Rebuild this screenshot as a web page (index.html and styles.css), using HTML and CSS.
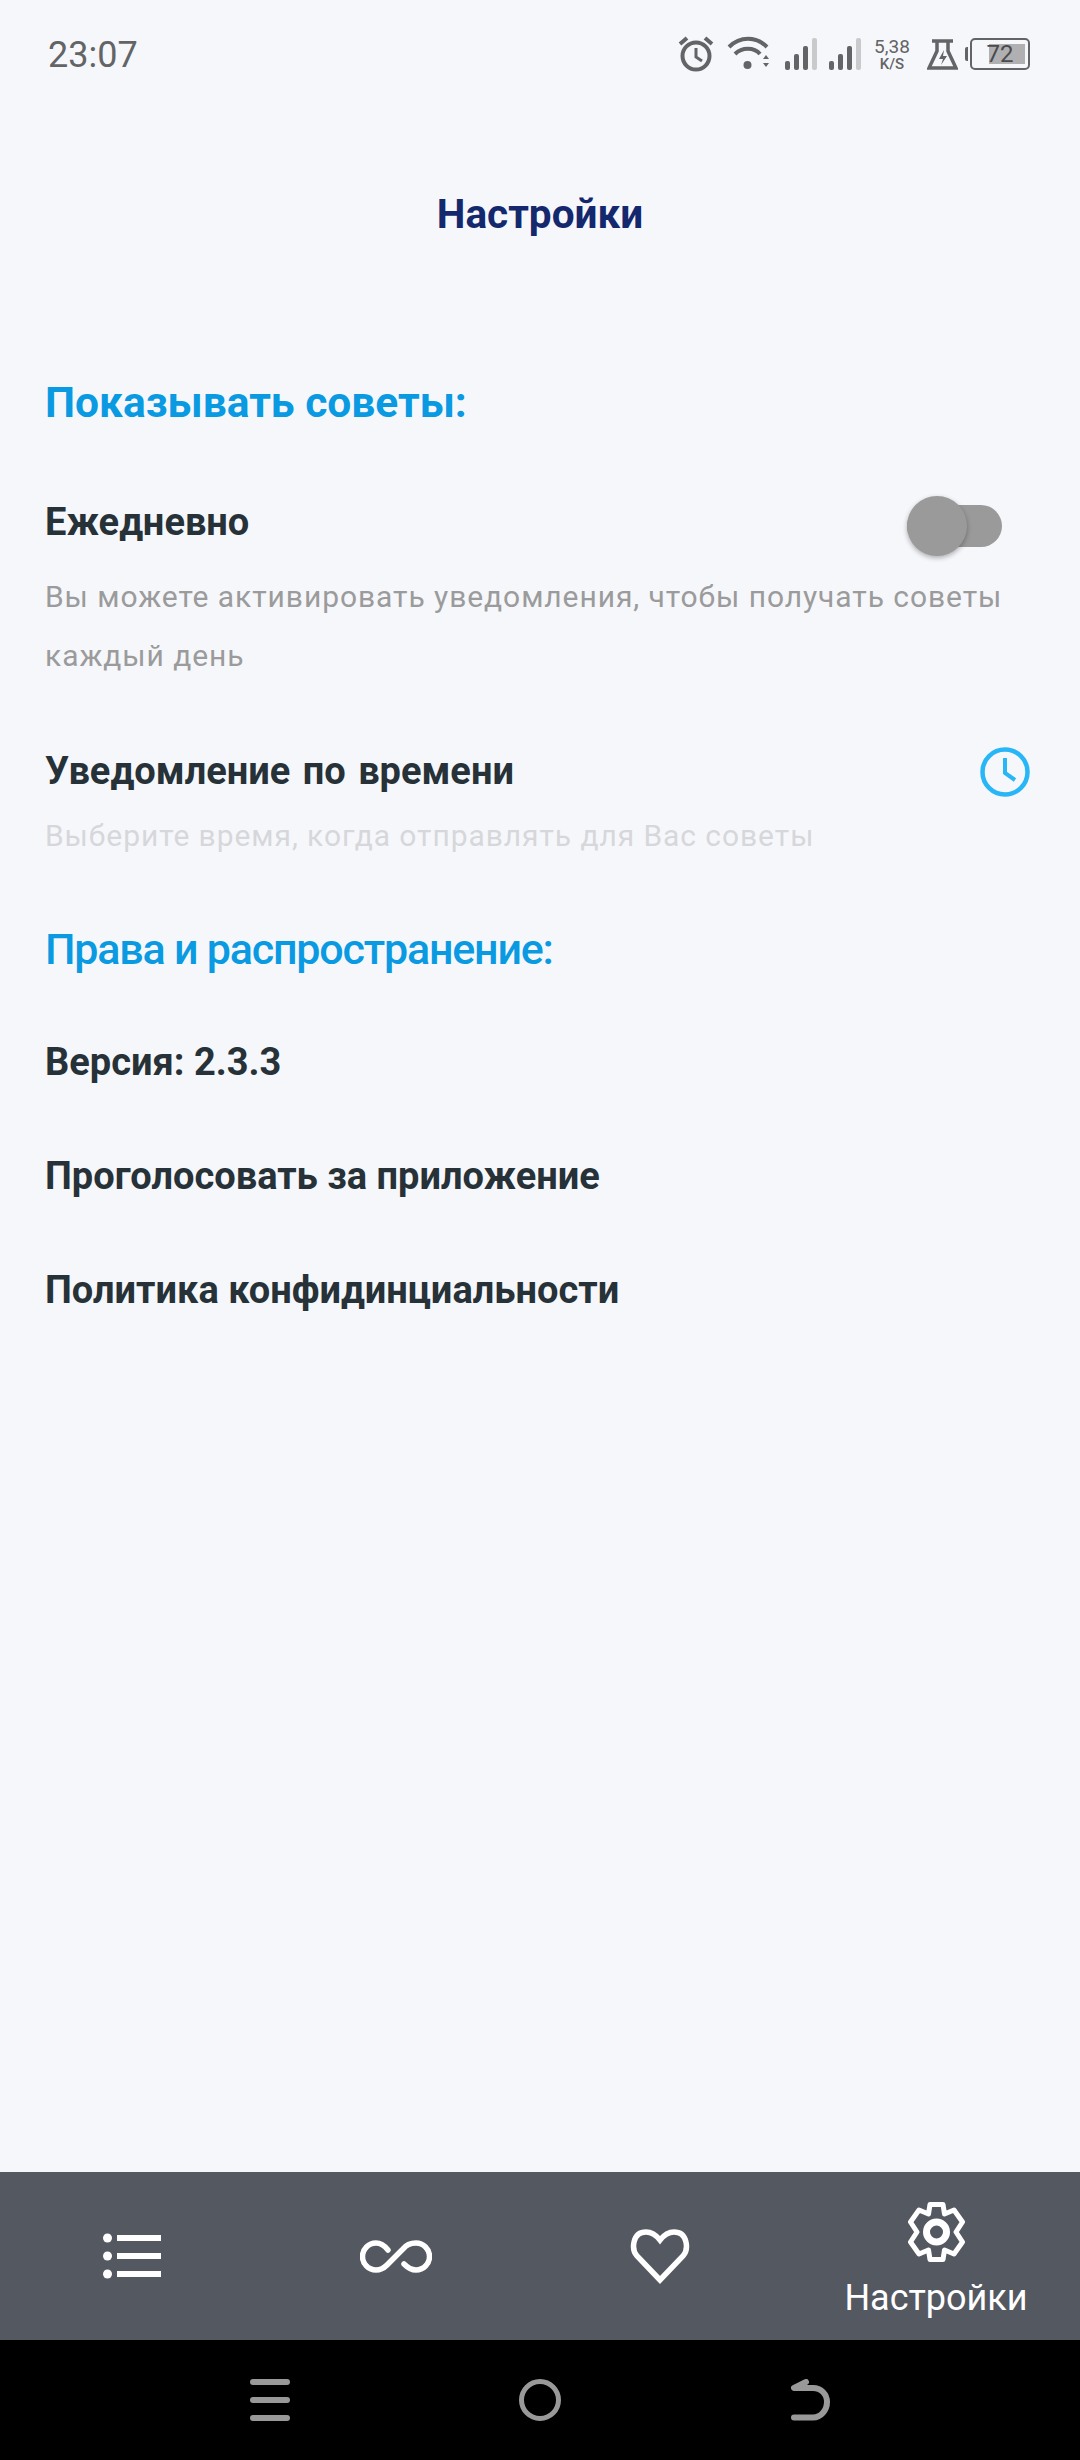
FILE: index.html
```html
<!DOCTYPE html>
<html lang="ru">

<head>
    <meta charset="UTF-8">
    <meta name="viewport" content="width=device-width, initial-scale=1.0">
    <title>Настройки</title>
    <link rel="stylesheet" href="styles.css">
</head>

<body>
    <div class="screen">

        <div class="status-bar">
            <span class="status-time">23:07</span>
            <div class="status-icons">
                <svg class="ic-alarm" width="36" height="36" viewBox="0 0 36 36">
                    <circle cx="18" cy="20" r="13.500" fill="none" stroke="#636466" stroke-width="4" />
                    <path d="M18 12v9l6 4" fill="none" stroke="#636466" stroke-width="3" />
                    <path d="M2 8l7-6M34 8l-7-6" fill="none" stroke="#636466" stroke-width="4" />
                </svg>
                <svg class="ic-wifi" width="43" height="34" viewBox="0 0 43 34">
                    <path d="M2 11C13 0 29 0 40 11" fill="none" stroke="#636466" stroke-width="4" />
                    <path d="M8 18C15 11 27 11 33 18" fill="none" stroke="#636466" stroke-width="4" />
                    <circle cx="20.500" cy="29" r="4" fill="#636466" />
                    <path d="M36 23l3-4 3 4zM36 27l3 4 3-4z" fill="#636466" />
                </svg>
                <div class="signal">
                    <i class="bar b1"></i><i class="bar b2"></i><i class="bar b3"></i><i class="bar b4"></i>
                </div>
                <div class="signal">
                    <i class="bar b1"></i><i class="bar b2"></i><i class="bar b3"></i><i class="bar b4"></i>
                </div>
                <div class="speed">
                    <span class="speed-num">5,38</span>
                    <span class="speed-unit">K/S</span>
                </div>
                <svg class="ic-flask" width="31" height="31" viewBox="0 0 31 31">
                    <path d="M5 2h21M10 2v10L2 29h27L21 12V2" fill="none" stroke="#636466" stroke-width="3.500" />
                    <path d="M17 11l-5 9h4l-2 6 6-9h-4z" fill="#636466" />
                </svg>
                <div class="battery">
                    <i class="battery-tip"></i>
                    <div class="battery-body">
                        <i class="battery-level"></i>
                        <span class="battery-num">72</span>
                    </div>
                </div>
            </div>
        </div>

        <h1 class="page-title">Настройки</h1>

        <main class="content">
            <h2 class="section-title">Показывать советы:</h2>

            <div class="row">
                <span class="item-title">Ежедневно</span>
                <div class="switch"><i class="switch-knob"></i></div>
            </div>
            <p class="desc">Вы можете активировать уведомления, чтобы получать советы каждый день</p>

            <div class="row row-time">
                <span class="item-title">Уведомление по времени</span>
                <svg class="ic-clock" width="50" height="50" viewBox="0 0 50 50">
                    <circle cx="25" cy="25" r="22.500" fill="none" stroke="#29b6f6" stroke-width="4.500" />
                    <path d="M25 11v15l10 7" fill="none" stroke="#29b6f6" stroke-width="4" />
                </svg>
            </div>
            <p class="desc desc-off">Выберите время, когда отправлять для Вас советы</p>

            <h2 class="section-title section-two">Права и распространение:</h2>

            <div class="link-row">Версия: 2.3.3</div>
            <div class="link-row">Проголосовать за приложение</div>
            <div class="link-row">Политика конфидинциальности</div>
        </main>

        <nav class="tabs">
            <div class="tab">
                <svg width="58" height="46" viewBox="0 0 58 46">
                    <circle cx="4.500" cy="5" r="4.500" fill="#fff" />
                    <circle cx="4.500" cy="23" r="4.500" fill="#fff" />
                    <circle cx="4.500" cy="41" r="4.500" fill="#fff" />
                    <path d="M14 2h44v6H14zM14 20h44v6H14zM14 38h44v6H14z" fill="#fff" />
                </svg>
            </div>
            <div class="tab">
                <svg width="72" height="33" viewBox="0 0 72 33">
                    <path d="M28 10C24 5 20 3 16 3A13.500 13.500 0 0 0 16 30C20 30 24 28 27 25L43 9C46 5 51 3 56 3A13.500 13.500 0 0 1 56 30C51 30 47 27 44 24" fill="none" stroke="#fff" stroke-width="5.500" stroke-linecap="round" />
                </svg>
            </div>
            <div class="tab">
                <svg width="60" height="55" viewBox="0 0 60 55">
                    <path d="M30 51L7 27C1 20 2.500 3 16 3C22 3 26 6 30 11C34 6 38 3 44 3C57.500 3 59 20 53 27Z" fill="none" stroke="#fff" stroke-width="5.500" />
                </svg>
            </div>
            <div class="tab tab-active">
                <svg width="57" height="60" viewBox="0 0 57 60">
                    <path d="M22 2.500H35L36.500 12L46 8L54.500 20L48 30L54.500 40L46 52L36.500 48L35 57.500H22L20.500 48L11 52L2.500 40L9 30L2.500 20L11 8L20.500 12Z" fill="none" stroke="#fff" stroke-width="5" stroke-linejoin="round" />
                    <circle cx="28.500" cy="30" r="10" fill="none" stroke="#fff" stroke-width="7" />
                </svg>
                <span class="tab-label">Настройки</span>
            </div>
        </nav>

        <div class="system-nav">
            <svg width="40" height="42" viewBox="0 0 40 42">
                <path d="M3 3h34M3 21h34M3 39h34" stroke="#999" stroke-width="6" stroke-linecap="round" />
            </svg>
            <svg width="42" height="42" viewBox="0 0 42 42">
                <circle cx="21" cy="21" r="18.500" fill="none" stroke="#999" stroke-width="5" />
            </svg>
            <svg width="40" height="42" viewBox="0 0 40 42">
                <path d="M16 3L4 9H23C31 9 37 15 37 23S31 38.500 23 38.500H4" fill="none" stroke="#999" stroke-width="6" stroke-linecap="round" stroke-linejoin="round" />
            </svg>
        </div>

    </div>
</body>

</html>
```

FILE: styles.css
```css
* {
    box-sizing: border-box;
}

html,
body {
    margin: 0;
    padding: 0;
}

body {
    font-family: Roboto, "Noto Sans", sans-serif;
    background: #f6f7fb;
}

.screen {
    width: 1080px;
    height: 2460px;
    display: flex;
    flex-direction: column;
    overflow: hidden;
}

/* status bar */
.status-bar {
    height: 110px;
    padding: 36px 50px 0 48px;
    display: flex;
    justify-content: space-between;
    align-items: flex-start;
    color: #636466;
}

.status-time {
    font-size: 36px;
    line-height: 38px;
}

.status-icons {
    display: flex;
    align-items: flex-start;
}

.ic-wifi {
    margin-left: 13px;
}

.signal {
    width: 32px;
    height: 32px;
    margin-left: 12px;
    margin-top: 2px;
    display: flex;
    align-items: flex-end;
    justify-content: space-between;
}

.signal:first-of-type {
    margin-left: 15px;
}

.bar {
    display: block;
    width: 5px;
    background: #636466;
    border-radius: 2px;
}

.b1 {
    height: 9px;
}

.b2 {
    height: 16px;
}

.b3 {
    height: 24px;
}

.b4 {
    height: 32px;
    background: #c9cacc;
}

.speed {
    width: 38px;
    margin-left: 12px;
    margin-top: 1px;
    display: flex;
    flex-direction: column;
    align-items: center;
    white-space: nowrap;
}

.speed-num {
    font-size: 19px;
    line-height: 20px;
}

.speed-unit {
    font-size: 15px;
    line-height: 15px;
    font-weight: 500;
}

.ic-flask {
    margin-left: 16px;
    margin-top: 3px;
}

.battery {
    margin-left: 7px;
    margin-top: 2px;
    display: flex;
    align-items: center;
}

.battery-tip {
    display: block;
    width: 3px;
    height: 14px;
    background: #636466;
    border-radius: 2px 0 0 2px;
    margin-right: 2px;
}

.battery-body {
    position: relative;
    width: 60px;
    height: 32px;
    border: 2px solid #636466;
    border-radius: 5px;
    display: flex;
    align-items: center;
    justify-content: center;
}

.battery-level {
    position: absolute;
    left: 17px;
    top: 4px;
    bottom: 4px;
    right: 3px;
    background: #b0b0b2;
}

.battery-num {
    position: relative;
    font-size: 24px;
    color: #4a4b4d;
}

.page-title {
    margin: 62px 0 0;
    height: 84px;
    line-height: 84px;
    text-align: center;
    font-size: 40.5px;
    font-weight: 700;
    color: #14286e;
}

/* settings list */
.content {
    flex: 1;
    padding: 0 78px 0 45px;
}

.section-title {
    margin: 0;
    padding-top: 120px;
    line-height: 54px;
    font-size: 42.5px;
    font-weight: 700;
    color: #0a9ae2;
}

.section-two {
    padding-top: 0;
    margin-top: 57px;
    margin-bottom: 29px;
    font-size: 43px;
    font-weight: 500;
    letter-spacing: -1.2px;
}

.row {
    display: flex;
    justify-content: space-between;
    align-items: center;
    height: 64px;
    margin-top: 60px;
    margin-bottom: 13px;
}

.row-time {
    margin-top: 54px;
    margin-bottom: 3px;
    margin-right: -28px;
}

.item-title {
    font-size: 38px;
    font-weight: 700;
    color: #263238;
    word-spacing: 3px;
}

.switch {
    position: relative;
    width: 95px;
    height: 42px;
    margin-top: 8px;
    background: #9a9a9a;
    border-radius: 21px;
}

.switch-knob {
    position: absolute;
    left: 0;
    top: -9px;
    width: 60px;
    height: 60px;
    border-radius: 50%;
    background: #9a9a9a;
    box-shadow: 0 2px 5px rgba(0, 0, 0, 0.3);
}

.ic-clock {
    margin-top: 2px;
}

.desc {
    margin: 0 -20px 0 0;
    font-size: 30px;
    line-height: 59px;
    letter-spacing: 0.93px;
    color: #9b9b9b;
}

.desc-off {
    color: #d6d7da;
}

.link-row {
    height: 114px;
    line-height: 114px;
    font-size: 38px;
    font-weight: 700;
    color: #263238;
}

/* bottom tabs */
.tabs {
    height: 168px;
    background: #545861;
    display: flex;
    color: #fff;
}

.tab {
    width: 264px;
    display: flex;
    flex-direction: column;
    align-items: center;
    justify-content: center;
}

.tab-active {
    width: 288px;
    justify-content: flex-start;
    padding-top: 30px;
}

.tab-label {
    font-size: 36px;
    line-height: 40px;
    margin-top: 16px;
}

.system-nav {
    height: 120px;
    background: #000;
    display: flex;
    align-items: center;
    justify-content: center;
    gap: 229px;
}
```
